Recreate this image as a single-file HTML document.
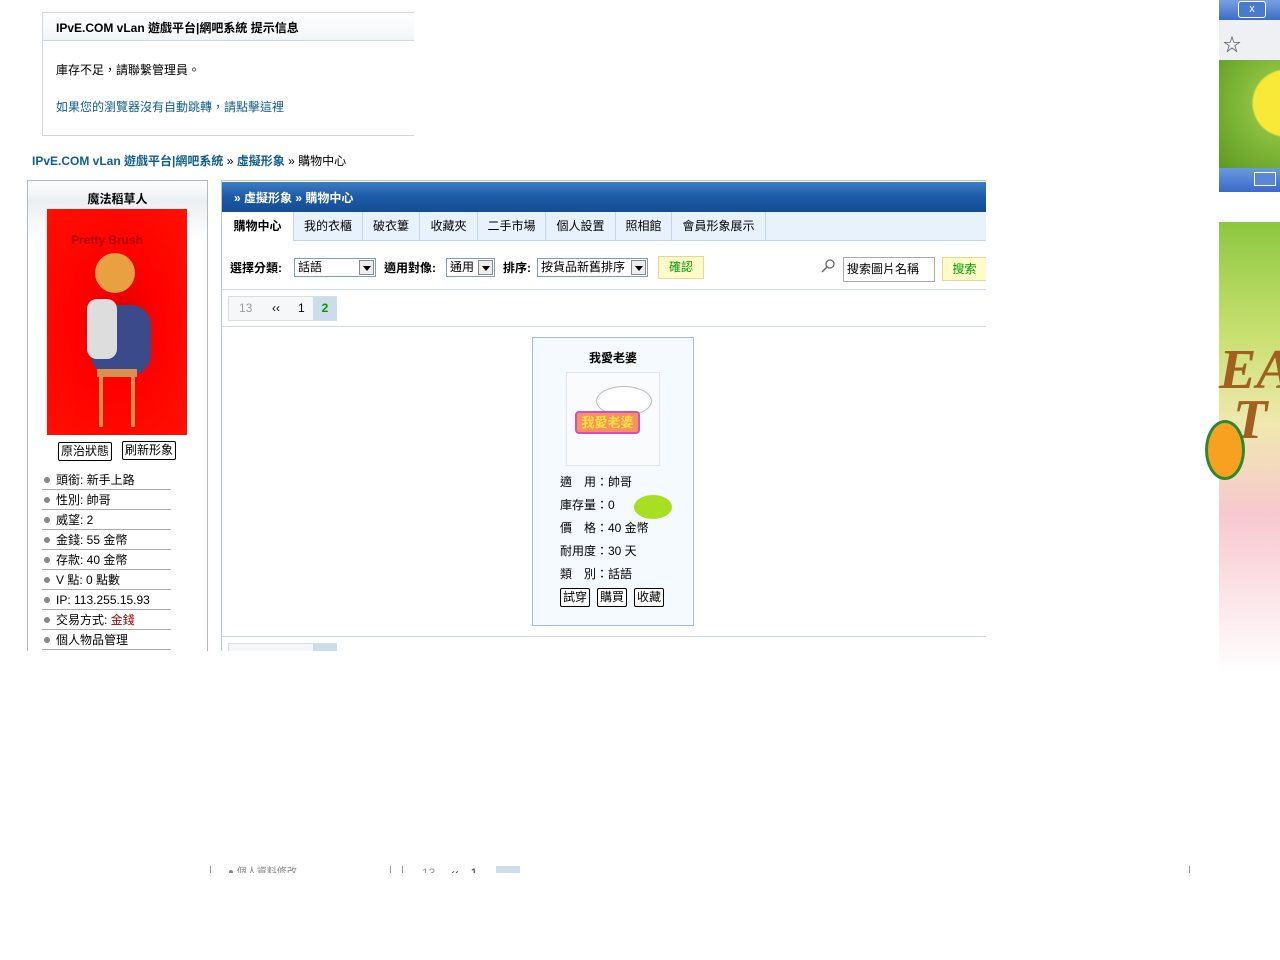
<!DOCTYPE html>
<html><head><meta charset="utf-8"><style>
*{margin:0;padding:0;box-sizing:border-box}
body{width:1280px;height:960px;background:#fff;position:relative;overflow:hidden;font-family:"Liberation Sans","Noto Sans CJK TC",sans-serif;font-size:12px;color:#000}
.a{position:absolute}
.btn{position:absolute;border:1px solid #000;border-radius:2px;background:#fff;font-size:12px;line-height:17px;padding:0 2px;text-align:center}
.li{position:absolute;left:42px;width:129px;height:20px;border-bottom:1px solid #aaa;font-size:12px;line-height:20px;padding-left:14px}
.li:before{content:"";position:absolute;left:2px;top:7px;width:6px;height:6px;border-radius:3px;background:#888}
.tab{position:absolute;top:212px;height:28px;line-height:29px;border-right:1px solid #c6d6e6;text-align:center;font-size:12px}
.sel{position:absolute;height:19px;border:1px solid #7f9db9;background:#fff;line-height:17px;padding-left:3px;font-size:12px}
.sel i{position:absolute;right:1px;top:1px;width:15px;height:15px;border:1px solid #888;background:#eee}
.sel i:after{content:"";position:absolute;left:3px;top:5px;border:4px solid transparent;border-top:5px solid #000;border-bottom:0}
</style></head><body>
<!-- notice -->
<div class="a" style="left:42px;top:12px;width:372px;height:124px;border:1px solid #cfd6de;border-right:0"></div>
<div class="a" style="left:43px;top:13px;width:371px;height:28px;background:linear-gradient(#fff,#f2f5f8);border-bottom:1px solid #cfd6de"></div>
<div class="a" style="left:56px;top:19px;font-weight:bold;font-size:12px">IPvE.COM vLan 遊戲平台|網吧系統 提示信息</div>
<div class="a" style="left:56px;top:61px">庫存不足，請聯繫管理員。</div>
<div class="a" style="left:56px;top:98px;color:#105e8e">如果您的瀏覽器沒有自動跳轉，請點擊這裡</div>
<div class="a" style="left:32px;top:152px;font-size:12px"><b style="color:#105e8e">IPvE.COM vLan 遊戲平台|網吧系統</b> » <b style="color:#105e8e">虛擬形象</b> » 購物中心</div>
<!-- left panel -->
<div class="a" style="left:27px;top:180px;width:181px;height:480px;border:1px solid #b0b8c0;border-bottom:0;background:linear-gradient(#fff 0,#eceff2 20px,#fff 60px)"></div>
<div class="a" style="left:27px;top:190px;width:181px;text-align:center;font-weight:bold">魔法稻草人</div>
<div class="a" style="left:47px;top:209px;width:140px;height:226px;background:radial-gradient(ellipse at 50% 50%,#d00 0,#f00 40%,#f10 100%)">
<div class="a" style="left:24px;top:24px;color:#8a0000;font-weight:bold;font-size:12px;opacity:.7">Pretty Brush</div>
<div class="a" style="left:48px;top:44px;width:40px;height:40px;border-radius:50%;background:#e8a040"></div>
<div class="a" style="left:44px;top:96px;width:60px;height:70px;border-radius:20px;background:#3a4a8a"></div>
<div class="a" style="left:40px;top:90px;width:30px;height:60px;background:#ddd;border-radius:10px"></div>
<div class="a" style="left:50px;top:160px;width:40px;height:8px;background:#d89050"></div>
<div class="a" style="left:52px;top:168px;width:4px;height:50px;background:#d89050"></div>
<div class="a" style="left:84px;top:168px;width:4px;height:50px;background:#d89050"></div>
</div>
<div class="btn" style="left:58px;top:442px">原治狀態</div>
<div class="btn" style="left:122px;top:441px">刷新形象</div>
<div class="li" style="top:470px">頭銜: 新手上路</div>
<div class="li" style="top:490px">性別: 帥哥</div>
<div class="li" style="top:510px">威望: 2</div>
<div class="li" style="top:530px">金錢: 55 金幣</div>
<div class="li" style="top:550px">存款: 40 金幣</div>
<div class="li" style="top:570px">V 點: 0 點數</div>
<div class="li" style="top:590px">IP: 113.255.15.93</div>
<div class="li" style="top:610px">交易方式: <span style="color:#900">金錢</span></div>
<div class="li" style="top:630px">個人物品管理</div>
<div class="a" style="left:0;top:651px;width:1000px;height:220px;background:#fff"></div>
<!-- main -->
<div class="a" style="left:221px;top:180px;width:765px;height:471px;border-left:1px solid #b8c4d0;border-top:1px solid #b8c4d0"></div>
<div class="a" style="left:222px;top:182px;width:764px;height:30px;background:linear-gradient(#3e7cc4,#1d5aa6 50%,#154c94)"></div>
<div class="a" style="left:234px;top:189px;color:#fff;font-weight:bold">» 虛擬形象 » 購物中心</div>
<div class="a" style="left:222px;top:212px;width:764px;height:29px;background:#e8f2fc;border-bottom:1px solid #c6d6e6"></div>
<div class="tab" style="left:222px;width:72px;background:#fff;font-weight:bold;height:29px">購物中心</div>
<div class="tab" style="left:294px;width:69px">我的衣櫃</div>
<div class="tab" style="left:363px;width:57px">破衣簍</div>
<div class="tab" style="left:420px;width:58px">收藏夾</div>
<div class="tab" style="left:478px;width:68px">二手市場</div>
<div class="tab" style="left:546px;width:70px">個人設置</div>
<div class="tab" style="left:616px;width:56px">照相館</div>
<div class="tab" style="left:672px;width:94px">會員形象展示</div>
<div class="a" style="left:230px;top:259px;font-weight:bold">選擇分類:</div>
<div class="sel" style="left:294px;top:258px;width:82px">話語<i></i></div>
<div class="a" style="left:384px;top:259px;font-weight:bold">適用對像:</div>
<div class="sel" style="left:446px;top:258px;width:49px">通用<i></i></div>
<div class="a" style="left:503px;top:259px;font-weight:bold">排序:</div>
<div class="sel" style="left:537px;top:258px;width:111px">按貨品新舊排序<i></i></div>
<div class="a" style="left:658px;top:256px;width:46px;height:23px;background:#fffbc8;border:1px solid #e6d890;color:#090;text-align:center;line-height:21px">確認</div>
<svg class="a" style="left:820px;top:259px" width="16" height="16"><circle cx="10" cy="5" r="4" fill="none" stroke="#666" stroke-width="1.3"/><line x1="7" y1="8" x2="2" y2="13" stroke="#666" stroke-width="1.5"/></svg>
<div class="a" style="left:843px;top:257px;width:92px;height:25px;border:1px solid #aaa;line-height:23px;padding-left:3px">搜索圖片名稱</div>
<div class="a" style="left:942px;top:257px;width:44px;height:24px;background:#fffbc8;border:1px solid #e6d890;border-right:0;color:#090;text-align:center;line-height:22px">搜索</div>
<div class="a" style="left:222px;top:289px;width:764px;height:1px;background:#d0dae4"></div>
<div class="a" style="left:228px;top:296px;width:109px;height:25px;border:1px solid #d8dde2;background:#f6f7f8"></div>
<div class="a" style="left:239px;top:301px;color:#999">13</div>
<div class="a" style="left:272px;top:301px">‹‹</div>
<div class="a" style="left:298px;top:301px">1</div>
<div class="a" style="left:313px;top:297px;width:24px;height:23px;background:#cddceb;color:#090;text-align:center;line-height:23px;font-weight:bold">2</div>
<div class="a" style="left:222px;top:326px;width:764px;height:1px;background:#d0dae4"></div>
<!-- card -->
<div class="a" style="left:532px;top:337px;width:162px;height:289px;border:1px solid #a9bccf;background:#f5faff"></div>
<div class="a" style="left:532px;top:349px;width:162px;text-align:center;font-weight:bold">我愛老婆</div>
<div class="a" style="left:566px;top:372px;width:94px;height:94px;border:1px solid #e0e4e8;background:#f9fbfd"></div>
<div class="a" style="left:596px;top:386px;width:56px;height:30px;border-radius:50%;background:#fff;border:1px solid #bbb"></div>
<div class="a" style="left:575px;top:411px;width:65px;height:23px;border:2px solid #d050c0;border-radius:4px;background:#f89060;color:#ffe040;font-weight:bold;font-size:13px;text-align:center;line-height:19px">我愛老婆</div>
<div class="a" style="left:560px;top:471px;line-height:23px">適　用：帥哥<br>庫存量：0<br>價　格：40 金幣<br>耐用度：30 天<br>類　別：話語</div>
<div class="a" style="left:634px;top:495px;width:38px;height:24px;border-radius:50%;background:#a6e020"></div>
<div class="btn" style="left:560px;top:588px">試穿</div>
<div class="btn" style="left:597px;top:588px">購買</div>
<div class="btn" style="left:634px;top:588px">收藏</div>
<div class="a" style="left:222px;top:636px;width:764px;height:1px;background:#d0dae4"></div>
<div class="a" style="left:228px;top:643px;width:109px;height:8px;border:1px solid #d8dde2;border-bottom:0;background:#f6f7f8"></div>
<div class="a" style="left:313px;top:644px;width:24px;height:7px;background:#cddceb"></div>
<!-- bottom artifacts -->
<div class="a" style="left:210px;top:866px;width:1px;height:7px;background:#999"></div>
<div class="a" style="left:228px;top:866px;font-size:10px;color:#888;height:7px;overflow:hidden;line-height:14px">● 個人資料修改</div>
<div class="a" style="left:390px;top:866px;width:1px;height:7px;background:#999"></div>
<div class="a" style="left:402px;top:866px;width:1px;height:7px;background:#999"></div>
<div class="a" style="left:422px;top:866px;height:7px;overflow:hidden;line-height:14px;color:#999">13　 <span style="color:#333">‹‹　1</span></div>
<div class="a" style="left:496px;top:866px;width:24px;height:7px;background:#cddceb"></div>
<div class="a" style="left:1189px;top:866px;width:1px;height:7px;background:#999"></div>
<!-- right strip -->
<div class="a" style="left:1219px;top:0;width:61px;height:20px;background:linear-gradient(#7aa0e0,#3b6cc8)"></div>
<div class="a" style="left:1238px;top:1px;width:28px;height:17px;border:1px solid #fff;border-radius:3px;background:#4a7ad0;color:#fff;text-align:center;line-height:15px;font-size:11px">x</div>
<div class="a" style="left:1219px;top:20px;width:61px;height:40px;background:#eef0f4"></div>
<div class="a" style="left:1223px;top:31px;font-size:18px;color:#444">☆</div>
<div class="a" style="left:1219px;top:60px;width:61px;height:108px;background:radial-gradient(circle at 110% 40%,#f8e838 0,#f8e838 35%,#8cc040 37%,#5a9a20 100%)"></div>
<div class="a" style="left:1219px;top:168px;width:61px;height:24px;background:linear-gradient(#6a98e0,#3a6ac8)"></div>
<div class="a" style="left:1254px;top:172px;width:22px;height:14px;border:1px solid #fff;background:#5a88d8"></div>
<div class="a" style="left:1219px;top:222px;width:61px;height:450px;background:linear-gradient(#8cc840 0,#c8e070 25%,#f0e8b0 45%,#f8c8d0 65%,#fff 100%)"></div>
<div class="a" style="left:1219px;top:345px;font-family:'Liberation Serif',serif;font-weight:bold;font-style:italic;font-size:56px;color:#a06020;line-height:50px">EAS<br>&nbsp;T</div>
<div class="a" style="left:1205px;top:420px;width:40px;height:60px;border-radius:50%;background:#f8a020;border:3px solid #2a8a30"></div>
</body></html>
